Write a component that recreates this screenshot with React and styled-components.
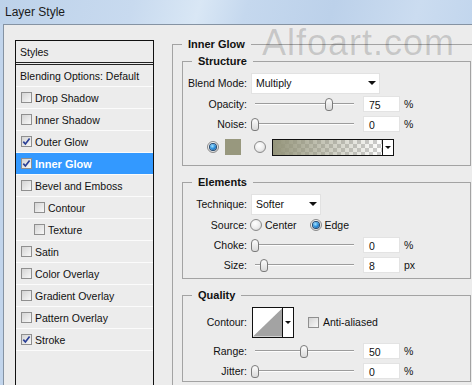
import React from "react";
import styled, { createGlobalStyle, css } from "styled-components";

const GlobalStyle = createGlobalStyle`
  html, body { margin: 0; padding: 0; }
  body {
    width: 472px;
    height: 385px;
    overflow: hidden;
    font-family: "Liberation Sans", Arial, sans-serif;
  }
`;

const Window = styled.div`
  position: relative;
  width: 472px;
  height: 385px;
  overflow: hidden;
  display: flex;
  flex-direction: column;
  background: #c2d5ec;
`;

const TitleBar = styled.div`
  height: 24px;
  flex-shrink: 0;
  display: flex;
  align-items: center;
  padding-left: 5px;
  font-size: 12px;
  color: #1a1a1a;
  background: linear-gradient(
    105deg,
    #bdd2ea 0%,
    #c8daef 28%,
    #d9e7f5 42%,
    #c5d8ee 52%,
    #bcd1ea 70%,
    #cbdcf0 88%,
    #c2d6ed 100%
  );
`;

const Frame = styled.div`
  flex: 1;
  display: flex;
  min-height: 0;
  padding-left: 3px;
`;

const Client = styled.div`
  flex: 1;
  display: flex;
  align-items: flex-start;
  background: #ececec;
  border-top: 1px solid #8593a3;
  border-left: 1px solid #8593a3;
  padding: 15px 0 0 11px;
  font-size: 10.5px;
  color: #111;
`;

const StylesList = styled.div`
  width: 139px;
  height: 400px;
  flex-shrink: 0;
  box-sizing: border-box;
  border: 1px solid #111;
  background: #ececec;
`;

const ListHeader = styled.div`
  height: 21px;
  display: flex;
  align-items: center;
  padding-left: 4px;
  border-bottom: 3px double #222;
`;

const ListItem = styled.div`
  height: 21px;
  display: flex;
  align-items: center;
  padding-left: ${(p) => (p.$indent ? 18 : 5)}px;
  border-bottom: 1px solid #fbfbfb;
  white-space: nowrap;
  ${(p) =>
    p.$selected &&
    css`
      background: #3399ff;
      color: #fff;
      font-weight: bold;
      font-size: 11px;
    `}
`;

const CheckBox = styled.span`
  width: 11px;
  height: 11px;
  box-sizing: border-box;
  flex-shrink: 0;
  border: 1px solid #8f8f8f;
  background: linear-gradient(135deg, #d4d4d4, #f8f8f8);
  display: inline-flex;
  align-items: center;
  justify-content: center;
  margin-right: ${(p) => p.$mr ?? 3}px;
  margin-left: ${(p) => p.$ml ?? 0}px;
`;

const Outer = styled.fieldset`
  margin: -3px 0 0 18px;
  padding: 3px 9px 0 9px;
  border: 1px solid #a3a3a3;
  width: 309px;
  height: 400px;
  box-sizing: border-box;
  min-width: 0;
  flex-shrink: 0;
`;

const Legend = styled.legend`
  font-weight: bold;
  font-size: 11px;
  line-height: 14px;
  padding: 0 6px;
  margin-left: ${(p) => p.$ml || 0}px;
  color: #111;
`;

const Group = styled.fieldset`
  margin: 0 0 9px 0;
  padding: 4px 4px ${(p) => p.$pb || 0}px 4px;
  border: 1px solid #a3a3a3;
  width: 289px;
  box-sizing: border-box;
  min-width: 0;
`;

const Row = styled.div`
  display: flex;
  align-items: center;
  height: ${(p) => p.$h || 20}px;
  margin-top: ${(p) => p.$mt || 0}px;
  padding-left: ${(p) => p.$pl || 0}px;
  white-space: nowrap;
`;

const Label = styled.span`
  width: 60px;
  flex-shrink: 0;
  text-align: right;
  margin-right: 4px;
`;

const Select = styled.div`
  width: ${(p) => p.$w}px;
  height: 21px;
  box-sizing: border-box;
  background: #fff;
  border: 1px solid #e2e2e2;
  display: flex;
  align-items: center;
  justify-content: space-between;
  padding: 0 3px 0 4px;
`;

const Caret = styled.span`
  width: 0;
  height: 0;
  border-left: ${(p) => p.$s || 4}px solid transparent;
  border-right: ${(p) => p.$s || 4}px solid transparent;
  border-top: ${(p) => p.$s || 4}px solid #111;
`;

const Slider = styled.div`
  position: relative;
  width: 106px;
  height: 13px;
  flex-shrink: 0;
  &::before {
    content: "";
    position: absolute;
    left: 4px;
    right: 3px;
    top: 5px;
    height: 1px;
    background: #9c9c9c;
    border-bottom: 1px solid #fdfdfd;
  }
`;

const Thumb = styled.span`
  position: absolute;
  top: 0;
  width: 8px;
  height: 13px;
  box-sizing: border-box;
  border: 1px solid #7b7b7b;
  border-radius: 4px 4px 3px 3px;
  background: linear-gradient(#fdfdfd, #d9d9d9);
`;

const NumInput = styled.div`
  width: 37px;
  height: 16px;
  margin-left: 6px;
  box-sizing: border-box;
  background: #fff;
  border: 1px solid #e3e3e3;
  padding: 1px 0 0 5px;
  display: flex;
  align-items: center;
`;

const Unit = styled.span`
  margin-left: 4px;
`;

const Radio = styled.span`
  position: relative;
  width: 12px;
  height: 12px;
  flex-shrink: 0;
  box-sizing: border-box;
  border-radius: 50%;
  border: 1px solid #8a8a8a;
  margin-left: ${(p) => p.$ml || 0}px;
  background: radial-gradient(circle at 40% 35%, #ffffff 0%, #ececec 55%, #c4c4c4 100%);
  ${(p) =>
    p.$checked &&
    css`
      &::after {
        content: "";
        position: absolute;
        left: 2px;
        top: 2px;
        width: 6px;
        height: 6px;
        border-radius: 50%;
        background: radial-gradient(circle at 40% 35%, #a6e4ff 0%, #2b8fdc 50%, #0c4585 100%);
        box-shadow: 0 0 0 1px #23486f;
      }
    `}
`;

const Text = styled.span`
  margin-left: ${(p) => p.$ml || 0}px;
`;

const Swatch = styled.span`
  width: 16px;
  height: 16px;
  margin-left: 6px;
  background: #98987e;
  flex-shrink: 0;
`;

const GradBox = styled.div`
  display: flex;
  width: 122px;
  height: 17px;
  margin-left: 6px;
  box-sizing: border-box;
  border: 1px solid #111;
  flex-shrink: 0;
`;

const GradFill = styled.div`
  flex: 1;
  background: linear-gradient(to right, #94947a, rgba(148, 148, 122, 0)),
    repeating-conic-gradient(#cdcdcd 0 25%, #ffffff 0 50%) 0 0 / 8px 8px;
`;

const CaretCell = styled.div`
  width: 10px;
  flex-shrink: 0;
  border-left: 1px solid #111;
  background: #fff;
  display: flex;
  align-items: center;
  justify-content: center;
`;

const ContourBox = styled.div`
  display: flex;
  width: 42px;
  height: 31px;
  margin-left: 1px;
  box-sizing: border-box;
  border: 1px solid #111;
  background: #fff;
  flex-shrink: 0;
`;

const ContourPreview = styled.svg`
  display: block;
  width: 30px;
  height: 29px;
`;

const Watermark = styled.div`
  position: absolute;
  left: 262px;
  top: 25px;
  font-family: "Liberation Sans", Arial, sans-serif;
  font-size: 36px;
  line-height: 36px;
  letter-spacing: 1px;
  color: rgba(0, 0, 0, 0.16);
  pointer-events: none;
  white-space: nowrap;
`;

const Tick = () => (
  <svg width="9" height="9" viewBox="0 0 9 9">
    <path d="M1.3 4.6 L3.4 7 L7.6 1.6" fill="none" stroke="#2a3f96" strokeWidth="1.7" />
  </svg>
);

const SliderCtl = ({ pos }) => (
  <Slider>
    <Thumb style={{ left: `${pos * 98}px` }} />
  </Slider>
);

const SliderRow = ({ label, pos, value, unit, h, mt }) => (
  <Row $h={h} $mt={mt}>
    <Label>{label}</Label>
    <SliderCtl pos={pos} />
    <NumInput>{value}</NumInput>
    <Unit>{unit}</Unit>
  </Row>
);

const items = [
  { label: "Drop Shadow" },
  { label: "Inner Shadow" },
  { label: "Outer Glow", checked: true },
  { label: "Inner Glow", checked: true, selected: true },
  { label: "Bevel and Emboss" },
  { label: "Contour", indent: true },
  { label: "Texture", indent: true },
  { label: "Satin" },
  { label: "Color Overlay" },
  { label: "Gradient Overlay" },
  { label: "Pattern Overlay" },
  { label: "Stroke", checked: true },
];

export default function App() {
  return (
    <>
      <GlobalStyle />
      <Window>
        <TitleBar>Layer Style</TitleBar>
        <Frame>
          <Client>
            <StylesList>
              <ListHeader>Styles</ListHeader>
              <ListItem style={{ paddingLeft: 4 }}>Blending Options: Default</ListItem>
              {items.map((it) => (
                <ListItem key={it.label} $indent={it.indent} $selected={it.selected}>
                  <CheckBox>{it.checked && <Tick />}</CheckBox>
                  {it.label}
                </ListItem>
              ))}
            </StylesList>

            <Outer>
              <Legend>Inner Glow</Legend>

              <Group $pb={5}>
                <Legend $ml={5}>Structure</Legend>
                <Row $h={22}>
                  <Label>Blend Mode:</Label>
                  <Select $w={129}>
                    Multiply
                    <Caret />
                  </Select>
                </Row>
                <SliderRow label="Opacity:" pos={0.75} value="75" unit="%" />
                <SliderRow label="Noise:" pos={0} value="0" unit="%" />
                <Row $h={26} $pl={20}>
                  <Radio $checked />
                  <Swatch />
                  <Radio $ml={13} />
                  <GradBox>
                    <GradFill />
                    <CaretCell>
                      <Caret $s={3} />
                    </CaretCell>
                  </GradBox>
                </Row>
              </Group>

              <Group $pb={3}>
                <Legend $ml={5}>Elements</Legend>
                <Row $h={22}>
                  <Label>Technique:</Label>
                  <Select $w={70}>
                    Softer
                    <Caret />
                  </Select>
                </Row>
                <Row>
                  <Label>Source:</Label>
                  <Radio $ml={-1} />
                  <Text $ml={3}>Center</Text>
                  <Radio $checked $ml={13} />
                  <Text $ml={3}>Edge</Text>
                </Row>
                <SliderRow label="Choke:" pos={0} value="0" unit="%" />
                <SliderRow label="Size:" pos={0.09} value="8" unit="px" />
              </Group>

              <Group $pb={0}>
                <Legend $ml={5}>Quality</Legend>
                <Row $h={32}>
                  <Label>Contour:</Label>
                  <ContourBox>
                    <ContourPreview viewBox="0 0 30 29">
                      <polygon points="0,29 30,0 30,29" fill="#a3a3a3" />
                    </ContourPreview>
                    <CaretCell>
                      <Caret $s={3} />
                    </CaretCell>
                  </ContourBox>
                  <CheckBox $ml={14} $mr={4} />
                  Anti-aliased
                </Row>
                <SliderRow label="Range:" pos={0.5} value="50" unit="%" mt={3} />
                <SliderRow label="Jitter:" pos={0} value="0" unit="%" />
              </Group>
            </Outer>
          </Client>
        </Frame>
        <Watermark>Alfoart.com</Watermark>
      </Window>
    </>
  );
}
